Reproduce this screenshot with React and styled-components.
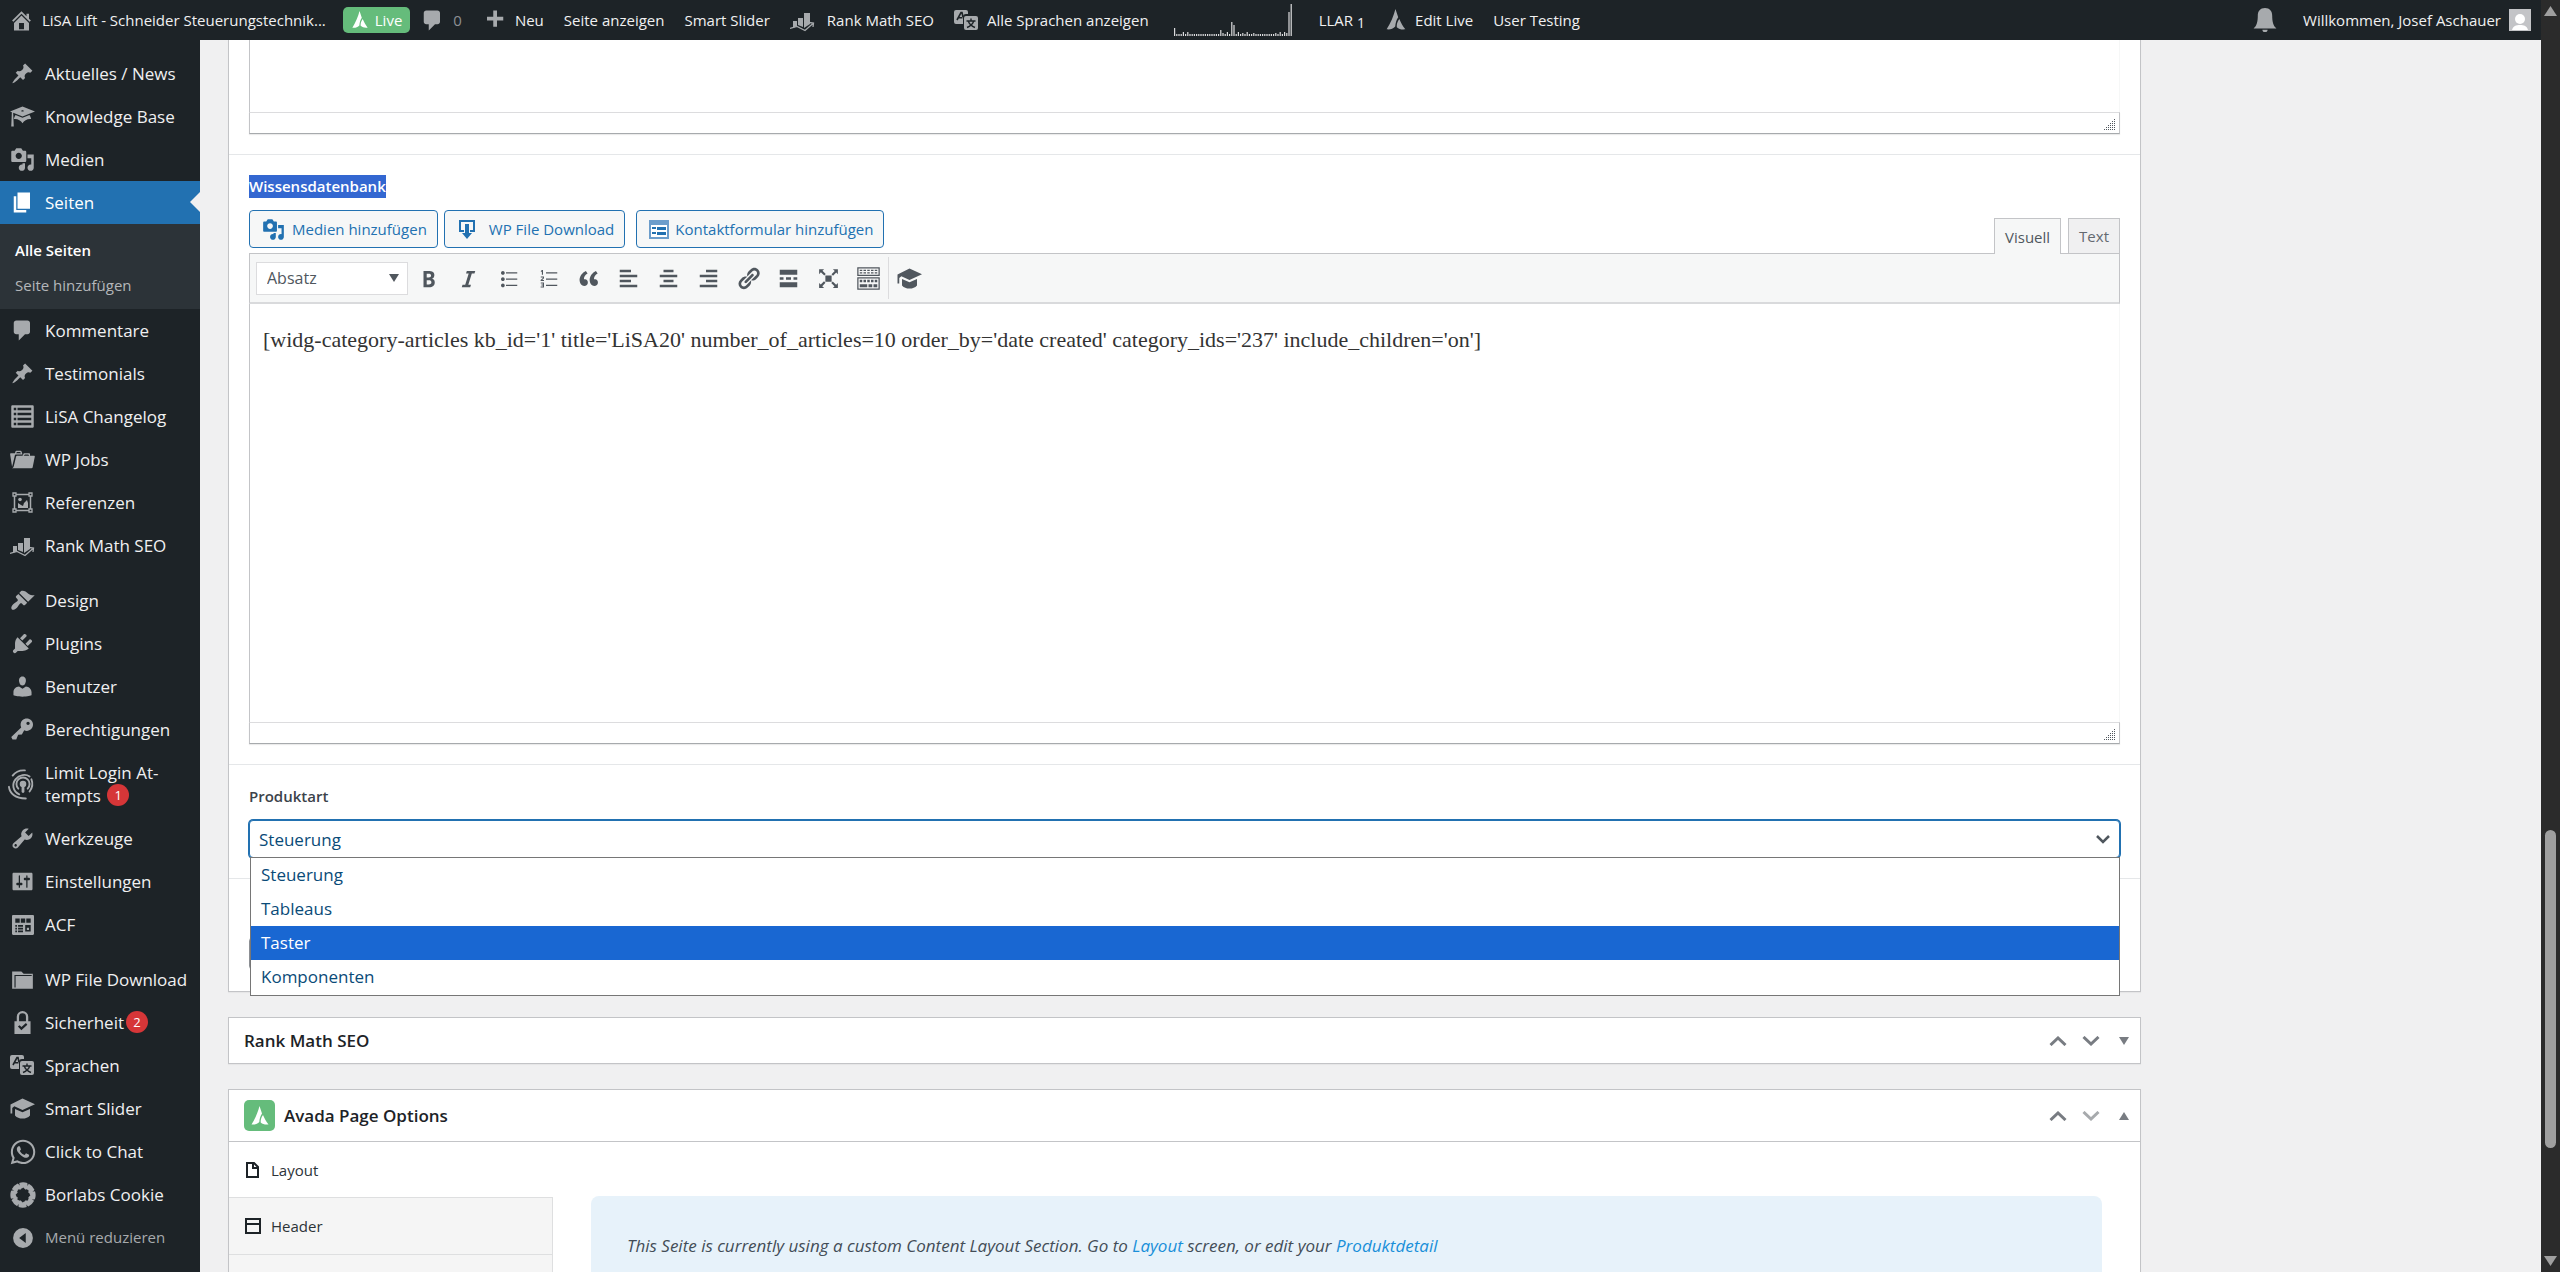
/*
  App.jsx: page edit screen (admin bar, side menu, meta boxes)
*/

import React from 'react'
import styled, { createGlobalStyle, css } from 'styled-components';
import { FaWhatsapp } from 'react-icons/fa';

const GlobalStyle = createGlobalStyle`
  * { box-sizing: border-box; }
  html, body, #root { height: 100%; }
  body {
    margin: 0;
    overflow: hidden;
    background: #f0f0f1;
    color: #3c434a;
    font-family: "Open Sans", "Noto Sans", sans-serif;
    font-size: 15px;
  }
  a { text-decoration: none; }
  button, select, input, textarea { font-family: inherit; margin: 0; }
`;

/* ---------- icons ---------- */

// single path glyphs on a 20x20 grid
const PATHS = {
  home: 'M16 8.5l1.53 1.53-1.06 1.06L10 4.6l-6.47 6.49-1.06-1.06L10 2.5l4 4v-2h2v4zm-6-2.46l6 5.99V18H4v-5.97zM12 17v-5H8v5h4z',
  plus: 'M17 7v3h-5v5H9v-5H4V7h5V2h3v5h5z',
  pin: 'M10.44 3.02l1.82-1.82 6.36 6.35-1.83 1.82c-1.05-.68-2.48-.57-3.41.36l-.75.75c-.92.93-1.04 2.35-.35 3.41l-1.83 1.82-2.41-2.41-2.8 2.79c-.42.42-3.38 2.71-3.8 2.29s1.86-3.39 2.28-3.81l2.79-2.79L4.1 9.36l1.83-1.82c1.05.69 2.48.57 3.4-.36l.75-.75c.93-.92 1.05-2.35.36-3.41z',
  learn: 'M10 10L2.54 7.02 3 18H1l.48-11.41L0 6l10-4 10 4zm0-5c-.55 0-1 .22-1 .5s.45.5 1 .5 1-.22 1-.5-.45-.5-1-.5zm0 6l5.57-2.23c.71.94 1.2 2.07 1.36 3.3-.3-.04-.61-.07-.93-.07-2.55 0-4.78 1.37-6 3.41C8.78 13.37 6.55 12 4 12c-.32 0-.63.03-.93.07.16-1.23.65-2.36 1.36-3.3z',
  media: 'M13 11V4c0-.55-.45-1-1-1h-1.67L9 1H5L3.67 3H2c-.55 0-1 .45-1 1v7c0 .55.45 1 1 1h10c.55 0 1-.45 1-1zM7 4.5c1.38 0 2.5 1.12 2.5 2.5S8.38 9.5 7 9.5 4.5 8.38 4.5 7 5.62 4.5 7 4.5zM14 6h5v10.5c0 1.38-1.12 2.5-2.5 2.5S14 17.88 14 16.5s1.12-2.5 2.5-2.5c.17 0 .34.02.5.05V9h-3V6zm-4 8.05V13h2v3.5c0 1.38-1.12 2.5-2.5 2.5S7 17.88 7 16.5 8.12 14 9.5 14c.17 0 .34.02.5.05z',
  page: 'M6 15V2h10v13H6zm-1 1h8v2H3V5h2v11z',
  comment: 'M5 2h9c1.1 0 2 .9 2 2v7c0 1.1-.9 2-2 2h-2l-5 5v-5H5c-1.1 0-2-.9-2-2V4c0-1.1.9-2 2-2z',
  portfolio: 'M4 5H.78c-.37 0-.74.32-.69.84l1.56 9.99S3.5 8.47 3.86 6.7c.11-.53.61-.7.98-.7H10s-.7-2.08-.77-2.31C9.11 3.25 8.89 3 8.45 3H5.14c-.36 0-.7.23-.8.64C4.25 4.04 4 5 4 5zm4.88 0h-4s.42-1 .87-1h2.13c.48 0 1 1 1 1zM2.67 16.25c-.31.47-.76.75-1.26.75h15.73c.54 0 .92-.31 1.03-.83.44-2.19 1.68-8.44 1.68-8.44.07-.5-.3-.73-.62-.73H16V5.53c0-.16-.26-.53-.66-.53h-3.76c-.52 0-.87.58-.87.58L10 7H5.59c-.32 0-.63.19-.69.5 0 0-1.59 6.7-1.72 7.33-.07.37-.22.99-.51 1.42zM15.38 7H11s.58-1 1.13-1h2.29c.71 0 .96 1 .96 1z',
  brush: 'M14.48 11.06L7.41 3.99l1.5-1.5c.5-.56 2.3-.47 3.51.32 1.21.8 1.43 1.28 2.91 2.1 1.18.64 2.45 1.26 4.45.85zm-.71.71L6.7 4.7 4.93 6.47c-.39.39-.39 1.02 0 1.41l1.06 1.06c.39.39.39 1.03 0 1.42-.6.6-1.43 1.11-2.21 1.69-.35.26-.7.53-1.01.84C1.43 14.23.4 16.08 1.4 17.07c.99 1 2.84-.03 4.18-1.36.31-.31.58-.66.85-1.02.57-.78 1.08-1.61 1.69-2.21.39-.39 1.02-.39 1.41 0l1.06 1.06c.39.39 1.02.39 1.41 0z',
  plug: 'M13.11 4.36L9.87 7.6 8 5.73l3.24-3.24c.35-.34 1.05-.2 1.56.32.52.51.66 1.21.31 1.55zm-8 1.77l.91-1.12 9.01 9.01-1.19.84c-.71.71-2.63 1.16-3.82 1.16H6.14L4.9 17.26c-.59.59-1.54.59-2.12 0-.59-.58-.59-1.53 0-2.12l1.24-1.24v-3.88c0-1.13.4-3.19 1.09-3.89zm7.26 3.97l3.24-3.24c.34-.35 1.04-.21 1.55.31.52.51.66 1.21.31 1.55l-3.24 3.25z',
  user: 'M10 9.25c-2.27 0-2.73-3.44-2.73-3.44C7 4.02 7.82 2 9.97 2c2.16 0 2.98 2.02 2.71 3.81 0 0-.41 3.44-2.68 3.44zm0 2.57L12.72 10c2.39 0 4.52 2.33 4.52 4.53v2.49s-3.65 1.13-7.24 1.13c-3.65 0-7.24-1.13-7.24-1.13v-2.49c0-2.25 1.94-4.48 4.47-4.48z',
  key: 'M16.95 2.58c1.96 1.95 1.96 5.12 0 7.07-1.51 1.51-3.75 1.84-5.59 1.01l-1.87 3.31-2.99.31L5 18H2l-1-2 7.95-7.69c-.92-1.87-.62-4.18.93-5.73 1.95-1.96 5.12-1.96 7.07 0zm-2.51 3.79c.74 0 1.33-.6 1.33-1.34 0-.73-.59-1.33-1.33-1.33-.73 0-1.33.6-1.33 1.33 0 .74.6 1.34 1.33 1.34z',
  wrench: 'M16.68 9.77c-1.34 1.34-3.3 1.67-4.95.99l-5.41 6.52c-.99.99-2.59.99-3.58 0s-.99-2.59 0-3.57l6.52-5.42c-.68-1.65-.35-3.61.99-4.95 1.28-1.28 3.12-1.62 4.72-1.06l-2.89 2.89 2.82 2.82 2.86-2.87c.53 1.58.18 3.39-1.08 4.65zM3.81 16.21c.4.39 1.04.39 1.43 0 .4-.4.4-1.04 0-1.43-.39-.4-1.03-.4-1.43 0-.39.39-.39 1.03 0 1.43z',
  settings: 'M18 16V4c0-.55-.45-1-1-1H3c-.55 0-1 .45-1 1v12c0 .55.45 1 1 1h14c.55 0 1-.45 1-1zM8 11h1c.55 0 1 .45 1 1s-.45 1-1 1H8v1.5c0 .28-.22.5-.5.5s-.5-.22-.5-.5V13H6c-.55 0-1-.45-1-1s.45-1 1-1h1V5.5c0-.28.22-.5.5-.5s.5.22.5.5V11zm5-2h-1c-.55 0-1-.45-1-1s.45-1 1-1h1V5.5c0-.28.22-.5.5-.5s.5.22.5.5V7h1c.55 0 1 .45 1 1s-.45 1-1 1h-1v5.5c0 .28-.22.5-.5.5s-.5-.22-.5-.5V9z',
  list: 'M2 19h16c.55 0 1-.45 1-1V2c0-.55-.45-1-1-1H2c-.55 0-1 .45-1 1v16c0 .55.45 1 1 1zM3 3h2v2H3zM6 3h11v2H6zM3 7h2v2H3zM6 7h11v2H6zM3 11h2v2H3zM6 11h11v2H6zM3 15h2v2H3zM6 15h11v2H6z',
  acf: 'M1 1h18c.5 0 1 .5 1 1v16c0 .5-.5 1-1 1H1c-.5 0-1-.5-1-1V2c0-.5.5-1 1-1zM3 4v4h4V4zM8 4v4h4V4zM13 4v4h4V4zM12 10v6h5v-6zM13.500 12.500h2v2h-2zM3 10v1.500h1.500V10zM5.500 10v1.500H10V10zM3 12.500v1.500h1.500v-1.500zM5.500 12.500v1.500H10v-1.500zM3 15v1.500h1.500V15zM5.500 15v1.500H10V15z',
  folder: 'M1 3h8l2 2h8v13H1zM3 6v11h1V7h14V6z',
  lock: 'M10 0a5 5 0 0 1 5 5v4h2v11H3V9h2V5a5 5 0 0 1 5-5zM10 2a3 3 0 0 0-3 3v4h6V5a3 3 0 0 0-3-3zM6 13.500l3 3.200 5.200-4.700-1.200-1.500-3.900 3.500-1.700-1.700z',
  collapse: 'M10 1a9 9 0 1 1 0 18 9 9 0 0 1 0-18zM12.500 5.500L6.500 10l6 4.500z',
  bell: 'M10 0c4 0 6 2.600 6 6.500 0 4.500.8 8.500 3.500 10.500H.5C3.200 15 4 11 4 6.500 4 2.600 6 0 10 0zM7.800 18.200h4.400a2.200 2 0 0 1-4.400 0z',
  cap: 'M10 2l10 4.600-10 4.600-6.500-3L1.800 9.500V14H.4V6.800zM4 10.300l6 2.700 6-2.700v5.200c-1.500 1.700-3.500 2.500-6 2.500s-4.500-.8-6-2.500z',
  bold: 'M6 4v13h4.540c1.370 0 2.460-.33 3.260-1 .8-.66 1.200-1.580 1.200-2.770 0-.84-.17-1.510-.51-2.010s-.9-.85-1.670-1.030v-.09c.57-.1 1.020-.4 1.360-.9s.51-1.130.51-1.910c0-1.140-.39-1.980-1.170-2.500C12.750 4.260 11.500 4 9.780 4H6zm2.570 5.150V6.260h1.360c.73 0 1.270.11 1.610.32.34.22.51.58.51 1.070 0 .54-.16.92-.47 1.150s-.82.35-1.510.35h-1.500zm0 2.190h1.600c1.440 0 2.160.53 2.160 1.610 0 .6-.17 1.050-.51 1.340s-.86.43-1.570.43H8.570v-3.380z',
  italic: 'M14.78 6h-2.130l-2.800 9h2.120l-.62 2H4.600l.62-2h2.140l2.800-9H8.030l.62-2h6.750z',
  ul: 'M5.500 7C4.670 7 4 6.330 4 5.500 4 4.680 4.670 4 5.500 4 6.320 4 7 4.680 7 5.500 7 6.330 6.320 7 5.500 7zM8 5h9v1H8V5zm-2.500 7c-.83 0-1.500-.67-1.500-1.500C4 9.680 4.670 9 5.500 9c.82 0 1.500.68 1.500 1.500 0 .83-.68 1.500-1.500 1.500zM8 10h9v1H8v-1zm-2.500 7c-.83 0-1.500-.67-1.500-1.500 0-.82.67-1.500 1.500-1.500.82 0 1.500.68 1.500 1.500 0 .83-.68 1.500-1.500 1.500zM8 15h9v1H8v-1z',
  ol: 'M8 5h9v1H8zM8 10h9v1H8zM8 15h9v1H8zM4.700 3.200h.9V7h-.9V4.400l-.8.4v-.9zM3.800 8.300h2.600v1.500L5 11.200h1.400v.8H3.700v-.8l1.800-1.700v-.4H3.800zM3.800 13.200h2.600v4H3.700v-.8h1.800v-.9H4.300v-.7h1.200V14H3.800z',
  quote: 'M9.490 13.220c0-.74-.2-1.380-.61-1.900-.62-.78-1.830-.88-2.530-.72-.29-1.650 1.110-3.750 2.920-4.650L7.880 4c-2.730 1.300-5.420 4.280-4.960 8.050C3.210 14.430 4.590 16 6.540 16c.85 0 1.560-.25 2.120-.75s.83-1.180.83-2.030zm8.050 0c0-.74-.2-1.380-.61-1.900-.63-.78-1.830-.88-2.530-.72-.29-1.650 1.110-3.750 2.920-4.650L15.930 4c-2.730 1.300-5.410 4.280-4.950 8.050.29 2.380 1.660 3.950 3.610 3.950.85 0 1.560-.25 2.120-.75s.83-1.180.83-2.030z',
  left: 'M12 5V3H3v2h9zm5 4V7H3v2h14zm-5 4v-2H3v2h9zm5 4v-2H3v2h14z',
  center: 'M14 5V3H6v2h8zm3 4V7H3v2h14zm-3 4v-2H6v2h8zm3 4v-2H3v2h14z',
  right: 'M17 5V3H8v2h9zm0 4V7H3v2h14zm0 4v-2H8v2h9zm0 4v-2H3v2h14z',
  link: 'M17.740 2.760c1.680 1.690 1.680 4.410 0 6.100l-1.530 1.520c-1.120 1.120-2.700 1.470-4.140 1.090l2.620-2.610.76-.77.76-.76c.84-.84.84-2.200 0-3.040-.84-.85-2.200-.85-3.040 0l-.77.76-3.380 3.380c-.37-1.440-.02-3.020 1.100-4.140l1.520-1.530c1.690-1.680 4.420-1.680 6.100 0zM8.590 13.430l5.340-5.340c.42-.42.42-1.100 0-1.520-.44-.43-1.130-.39-1.530 0l-5.330 5.340c-.42.42-.42 1.100 0 1.520.44.43 1.130.39 1.520 0zm-.76 2.290l4.140-4.150c.38 1.440.03 3.020-1.090 4.140l-1.520 1.530c-1.690 1.680-4.410 1.680-6.100 0-1.680-1.680-1.680-4.420 0-6.100l1.530-1.520c1.120-1.120 2.700-1.470 4.140-1.100l-4.140 4.150c-.85.84-.85 2.200 0 3.050.84.84 2.200.84 3.040 0z',
  more: 'M17 7V3H3v4h14zM6 11V9H3v2h3zm6 0V9H8v2h4zm5 0V9h-3v2h3zm0 6v-4H3v4h14z',
  full: 'M7.500 7.500h5v5h-5zM2.500 2.500h4L5.200 3.800l2.600 2.600-1.200 1.200-2.700-2.600L2.500 6.500zM17.500 2.500v4l-1.300-1.300-2.600 2.600-1.200-1.200 2.600-2.700-1.500-1.400zM2.500 17.500v-4l1.300 1.300 2.600-2.600 1.200 1.200-2.600 2.700 1.500 1.400zM17.500 17.500h-4l1.300-1.300-2.600-2.600 1.200-1.200 2.700 2.600 1.400-1.500z',
  sink: 'M1 1h18v7H1zM2 2v5h16V2zM3 3h2v1H3zM6 3h2v1H6zM9 3h2v1H9zM12 3h2v1h-2zM15 3h2v1h-2zM3 5h2v1H3zM6 5h2v1H6zM9 5h2v1H9zM12 5h2v1h-2zM15 5h2v1h-2zM1 9h18v10H1zM2 10v8h16v-8zM3 11h2v2H3zM6 11h2v2H6zM9 11h2v2H9zM12 11h2v2h-2zM15 11h2v2h-2zM3 14.500h6V17H3zM10 14.500h3V17h-3zM14 14.500h3V17h-3z',
  download: 'M2 1h16v12h-5v-2h3V3H4v8h3v2H2zM8 5h4v9h3l-5 6-5-6h3z',
};

function Glyph({ name, size = 25 }) {
  return (
    <svg width={size} height={size} viewBox="0 0 20 20" fill="currentColor" fillRule="evenodd" aria-hidden="true">
      <path d={PATHS[name]} />
    </svg>
  );
}

function RankIcon({ size = 25 }) {
  return (
    <svg width={size} height={size} viewBox="0 0 25 25" fill="currentColor" aria-hidden="true">
      <path d="M3 13h4v5l-4 2zM8 10h5v9l-5-2zM14 5h6v11l-6 4z" />
      <path d="M0 20.500l7-2 8 4 8-7M19 14.500l4.500.5-.5 4" fill="none" stroke="currentColor" strokeWidth="1.300" />
    </svg>
  );
}

function TranslateIcon({ size = 25 }) {
  return (
    <svg width={size} height={size} viewBox="0 0 25 25" aria-hidden="true">
      <path d="M2 2h10a2 2 0 0 1 2 2v2h-2a3 3 0 0 0-3 3v7H2a2 2 0 0 1-2-2V4a2 2 0 0 1 2-2z" fill="currentColor" />
      <path d="M12 8h10a2 2 0 0 1 2 2v10a2 2 0 0 1-2 2H12a2 2 0 0 1-2-2V10a2 2 0 0 1 2-2z" fill="currentColor" />
      <path d="M3 12l4-7.500h1L9 9M4.500 9.800H8.500" fill="none" stroke="#1d2327" strokeWidth="1.600" />
      <path d="M17 10.500v2M12.500 13h9M14.500 13.500c.8 2.500 3 4.500 6.500 6M19.500 13.500c-.8 2.500-3 4.500-6.500 6" fill="none" stroke="#1d2327" strokeWidth="1.400" />
    </svg>
  );
}

function FingerIcon() {
  return (
    <svg width="30" height="32" viewBox="0 0 32 34" fill="none" stroke="currentColor" strokeWidth="2" strokeLinecap="round" aria-hidden="true">
      <circle cx="16" cy="17" r="2.500" fill="currentColor" />
      <path d="M16 18v7" strokeWidth="3" />
      <path d="M11 22a7 7 0 1 1 10 0" />
      <path d="M12 28C5 25 4 17 8 12S19 6 23 9M25 12c2 5 1 9-2 13" />
      <path d="M1 20c1 7 7 12 18 12.500M5 8c3-4 7-6 13-5.500" />
    </svg>
  );
}

function ReferenceIcon() {
  return (
    <svg width="23" height="23" viewBox="0 0 23 23" fill="none" stroke="currentColor" aria-hidden="true">
      <path d="M3.500 3.500h16v16h-16z" strokeWidth="1.500" />
      <path d="M2 2h3v3H2zM18 2h3v3h-3zM2 18h3v3H2zM18 18h3v3h-3z" fill="#1d2327" strokeWidth="1.300" />
      <circle cx="9" cy="8.500" r="1.800" fill="currentColor" stroke="none" />
      <path d="M7 12l3 2 2 1 1-3 3-3 1 3v5H7z" fill="currentColor" stroke="none" />
    </svg>
  );
}

function BorlabsIcon() {
  return (
    <svg width="26" height="26" viewBox="-13 -13 26 26" fill="currentColor" aria-hidden="true">
      {[0, 45, 90, 135, 180, 225, 270, 315].map(a => (
        <path key={a} transform={`rotate(${a})`} d="M-3.800 -12A12.600 12.600 0 0 1 4.300 -11.900C5 -9 4 -6.500 2.500 -5.200L.3 -7.400C-1.500 -5.800 -3.500 -6 -5 -7.200C-3.300 -8.300 -3 -10 -3.800 -12z" />
      ))}
    </svg>
  );
}

function AvadaMark({ size }) {
  return (
    <svg width={size} height={size} viewBox="0 0 20 20" fill="currentColor" aria-hidden="true">
      <path d="M9.500 0C8 6 5 13 1.500 18.500c3 .4 5.800-.3 7.800-2.500.3-3.500 1-6 2.700-8.500z" />
      <path d="M13 9c-1.800 2.500-2.500 4.800-2.300 7.500 2 1.800 4.300 2.300 7.800 2-2.300-3-4-6-5.500-9.500z" />
    </svg>
  );
}

function Chevron({ up, width = 18 }) {
  return (
    <svg width={width} height="10" viewBox="0 0 18 10" fill="none" stroke="currentColor" strokeWidth="3" aria-hidden="true">
      <path d={up ? 'M1.500 9L9 2l7.500 7' : 'M1.500 1L9 8l7.500-7'} />
    </svg>
  );
}

/* ---------- admin bar ---------- */

const Bar = styled.header`
  display: flex;
  align-items: center;
  height: 40px;
  padding-left: 9px;
  background: #1d2327;
  color: #f0f0f1;
  line-height: 40px;
`;

const BarLink = styled.a`
  display: flex;
  align-items: center;
  gap: ${props => props.$gap || 8}px;
  padding: 0 ${props => props.$pad || 10}px;
  color: ${props => props.$dim ? '#8c8f94' : '#f0f0f1'};
  white-space: nowrap;

  &:first-child { padding-left: 0; }

  svg { color: #a7aaad; flex: none; }
`;

const LiveBadge = styled.a`
  display: flex;
  align-items: center;
  gap: 6px;
  height: 26px;
  margin-left: 7px;
  padding: 0 8px;
  border-radius: 5px;
  background: #65bc7b;
  color: #fff;
  line-height: 26px;
`;

const Small = styled.span`
  font-size: 14px;
  padding-top: 6px;
  margin-left: -4px;
`;

const Spacer = styled.div`
  flex: 1;
`;

const Avatar = styled.svg`
  width: 22px;
  height: 22px;
`;

const SPARK = [8,2,2,2,4,2,4,2,2,2,2,2,2,2,2,2,2,2,2,2,2,6,3,2,4,2,14,11,2,4,2,3,2,4,2,2,3,2,2,2,2,2,2,2,2,2,3,2,4,2,4,3,24,32];

function Sparkline() {
  return (
    <svg width="124" height="34" viewBox="0 0 124 34" aria-hidden="true">
      {SPARK.map((h, i) => (
        <rect key={i} x={2 + i * 2.2} y={33 - h} width="1.200" height={h} fill="#dcdcde" />
      ))}
    </svg>
  );
}

function AdminBar() {
  return (
    <Bar>
      <BarLink href="#"><Glyph name="home" />LiSA Lift - Schneider Steuerungstechnik...</BarLink>
      <LiveBadge href="#"><AvadaMark size={18} />Live</LiveBadge>
      <BarLink href="#" $dim><Glyph name="comment" />0</BarLink>
      <BarLink href="#"><Glyph name="plus" />Neu</BarLink>
      <BarLink href="#">Seite anzeigen</BarLink>
      <BarLink href="#">Smart Slider</BarLink>
      <BarLink href="#" $gap={12}><RankIcon />Rank Math SEO</BarLink>
      <BarLink href="#"><TranslateIcon />Alle Sprachen anzeigen</BarLink>
      <BarLink href="#" $pad={13}><Sparkline /></BarLink>
      <BarLink href="#">LLAR <Small>1</Small></BarLink>
      <BarLink href="#"><AvadaMark size={22} />Edit Live</BarLink>
      <BarLink href="#">User Testing</BarLink>
      <Spacer />
      <BarLink href="#" $pad={16}><Glyph name="bell" size={24} /></BarLink>
      <BarLink href="#">
        Willkommen, Josef Aschauer
        <Avatar viewBox="0 0 22 22" aria-hidden="true">
          <path d="M0 0h22v22H0z" fill="#c3c4c7" />
          <circle cx="11" cy="10" r="5" fill="#fff" />
          <path d="M3 21c1-4 4-5 8-5s7 1 8 5z" fill="#fff" />
        </Avatar>
      </BarLink>
    </Bar>
  );
}

/* ---------- side menu ---------- */

const SideMenu = styled.nav`
  flex: none;
  width: 200px;
  padding-top: 12px;
  background: #1d2327;
  font-size: 17px;
  line-height: 23px;
`;

const MenuItem = styled.a`
  position: relative;
  display: grid;
  grid-template-columns: 45px 1fr;
  align-items: center;
  min-height: 43px;
  padding: 10px 0;
  color: ${props => props.$muted ? '#a7aaad' : '#f0f0f1'};
  font-size: ${props => props.$muted ? 15 : 17}px;
  margin-top: ${props => props.$group ? 12 : 0}px;
  white-space: nowrap;

  svg {
    justify-self: center;
    color: #a7aaad;
    margin: -4px 0;
  }

  ${props => props.$active && css`
    background: #2271b1;
    color: #fff;

    svg { color: #fff; }

    &::after {
      content: '';
      position: absolute;
      right: 0;
      top: 11px;
      border: 10px solid transparent;
      border-left: 0;
      border-right-color: #f0f0f1;
    }
  `}
`;

const SubMenu = styled.div`
  display: flex;
  flex-direction: column;
  padding: 9px 15px 6px;
  background: #2c3338;
  font-size: 15px;
  line-height: 35px;
`;

const SubLink = styled.a`
  color: ${props => props.$current ? '#fff' : '#b4b7ba'};
  font-weight: ${props => props.$current ? 600 : 400};
`;

const Count = styled.span`
  display: inline-block;
  width: 22px;
  height: 22px;
  margin-left: 2px;
  border-radius: 50%;
  background: #d63638;
  color: #fff;
  font-size: 13px;
  line-height: 22px;
  text-align: center;
  vertical-align: top;
`;

const menu = [
  { text: 'Aktuelles / News', icon: <Glyph name="pin" size={23} /> },
  { text: 'Knowledge Base', icon: <Glyph name="learn" /> },
  { text: 'Medien', icon: <Glyph name="media" /> },
  { text: 'Seiten', icon: <Glyph name="page" />, active: true },
  { text: 'Kommentare', icon: <Glyph name="comment" /> },
  { text: 'Testimonials', icon: <Glyph name="pin" size={23} /> },
  { text: 'LiSA Changelog', icon: <Glyph name="list" /> },
  { text: 'WP Jobs', icon: <Glyph name="portfolio" /> },
  { text: 'Referenzen', icon: <ReferenceIcon /> },
  { text: 'Rank Math SEO', icon: <RankIcon /> },
  { text: 'Design', icon: <Glyph name="brush" />, group: true },
  { text: 'Plugins', icon: <Glyph name="plug" /> },
  { text: 'Benutzer', icon: <Glyph name="user" /> },
  { text: 'Berechtigungen', icon: <Glyph name="key" /> },
  { text: <>Limit Login At-<br />tempts <Count>1</Count></>, icon: <FingerIcon /> },
  { text: 'Werkzeuge', icon: <Glyph name="wrench" /> },
  { text: 'Einstellungen', icon: <Glyph name="settings" /> },
  { text: 'ACF', icon: <Glyph name="acf" size={22} /> },
  { text: 'WP File Download', icon: <Glyph name="folder" size={23} />, group: true },
  { text: <>Sicherheit<Count>2</Count></>, icon: <Glyph name="lock" size={23} /> },
  { text: 'Sprachen', icon: <TranslateIcon /> },
  { text: 'Smart Slider', icon: <Glyph name="cap" /> },
  { text: 'Click to Chat', icon: <FaWhatsapp size={28} /> },
  { text: 'Borlabs Cookie', icon: <BorlabsIcon /> },
  { text: 'Menü reduzieren', icon: <Glyph name="collapse" size={22} />, muted: true },
];

function Sidebar() {
  return (
    <SideMenu>
      {menu.map((item, i) => (
        <React.Fragment key={i}>
          <MenuItem href="#" $active={item.active} $group={item.group} $muted={item.muted}>
            {item.icon}
            <span>{item.text}</span>
          </MenuItem>
          {item.active && (
            <SubMenu>
              <SubLink href="#" $current>Alle Seiten</SubLink>
              <SubLink href="#">Seite hinzufügen</SubLink>
            </SubMenu>
          )}
        </React.Fragment>
      ))}
    </SideMenu>
  );
}

/* ---------- meta boxes ---------- */

const Below = styled.div`
  display: flex;
  height: calc(100vh - 40px);
  overflow: hidden;
`;

const Content = styled.main`
  flex: 1;
  min-width: 0;
  display: flex;
  flex-direction: column;
  gap: 25px;
  padding: 0 400px 0 28px;
`;

const Box = styled.section`
  flex: none;
  border: 1px solid #c3c4c7;
  border-top-width: ${props => props.$cut ? 0 : 1}px;
  background: #fff;
  box-shadow: 0 1px 1px rgba(0, 0, 0, 0.04);
`;

const Field = styled.div`
  position: relative;
  padding: 20px;
  padding-top: ${props => props.$cut ? 0 : 20}px;
  border-top: ${props => props.$cut ? '0' : '1px solid #e5e7e9'};
`;

const FieldLabel = styled.label`
  display: block;
  margin-bottom: 12px;
  color: #3c434a;
  font-size: 15px;
  font-weight: 600;
  line-height: 23px;
`;

const Selected = styled.span`
  display: inline-block;
  background: #3367d1;
  color: #fff;
`;

const ToolsRow = styled.div`
  display: flex;
  height: 43px;
`;

const MediaButton = styled.button`
  display: flex;
  align-items: center;
  gap: ${props => props.$gap}px;
  height: 38px;
  padding: 0 10px 0 12px;
  margin-right: ${props => props.$after || 0}px;
  border: 1px solid #2271b1;
  border-radius: 4px;
  background: #f6f7f7;
  color: #2271b1;
  font-size: 15px;
`;

const EditorTab = styled.button`
  align-self: flex-end;
  position: relative;
  height: ${props => props.$on ? 36 : 35}px;
  margin: 0 0 ${props => props.$on ? -1 : 0}px ${props => props.$on ? 'auto' : '7px'};
  padding: 0 10px;
  border: 1px solid #c3c4c7;
  border-bottom: 0;
  background: ${props => props.$on ? '#f6f7f7' : '#f0f0f1'};
  color: ${props => props.$on ? '#50575e' : '#646970'};
  font-size: 15px;
`;

const Toolbar = styled.div`
  display: flex;
  align-items: center;
  height: 51px;
  padding: 0 6px;
  border: 1px solid #c3c4c7;
  border-bottom: 2px solid #d9dadc;
  background: #f6f7f7;
`;

const FormatSelect = styled.select`
  width: 152px;
  height: 33px;
  padding: 0 10px;
  appearance: none;
  border: 1px solid #dcdcde;
  background: #fff url("data:image/svg+xml,%3Csvg xmlns='http://www.w3.org/2000/svg' width='10' height='8'%3E%3Cpath d='M0 0h10L5 8z' fill='%2350575e'/%3E%3C/svg%3E") no-repeat right 8px center;
  color: #50575e;
  font-size: 16px;
`;

const ToolButton = styled.button`
  display: grid;
  place-items: center;
  width: 34px;
  height: 34px;
  margin: 0 3px;
  padding: 0;
  border: 0;
  background: none;
  color: #50575e;
`;

const ToolDivider = styled.span`
  width: 1px;
  height: 42px;
  background: #dcdcde;
`;

const EditorText = styled.textarea`
  display: block;
  width: 100%;
  height: ${props => props.$height}px;
  padding: 22px 13px;
  border: 1px solid #f6f7f7;
  border-left-color: #c3c4c7;
  border-width: 0 1px;
  outline: 0;
  resize: none;
  background: #fff;
  color: #333;
  font-family: Georgia, "Liberation Serif", serif;
  font-size: 22px;
  line-height: 27px;
`;

const StatusBar = styled.div`
  display: flex;
  justify-content: flex-end;
  align-items: flex-end;
  height: 22px;
  padding: 0 3px 3px;
  border: 1px solid #c3c4c7;
  border-top-color: #dcdcde;
  border-bottom-color: #a7aaad;
  box-shadow: 0 1px 1px rgba(0, 0, 0, 0.08);
  color: #50575e;
`;

function Status() {
  const dots = [];
  for (let r = 0; r < 6; r++) {
    for (let c = 5 - r; c < 6; c++) {
      dots.push(<rect key={r + '-' + c} x={c * 2} y={r * 2 + 1} width="1" height="1" fill="currentColor" />);
    }
  }
  return <StatusBar><svg width="12" height="12" aria-hidden="true">{dots}</svg></StatusBar>;
}

const SelectWrap = styled.div`
  position: relative;
`;

const ProductSelect = styled.select`
  display: block;
  width: 100%;
  height: 38px;
  padding: 0 9px;
  appearance: none;
  border: 1px solid #2271b1;
  border-radius: 4px;
  outline: 0;
  box-shadow: 0 0 0 1px #2271b1;
  background: #fff url("data:image/svg+xml,%3Csvg xmlns='http://www.w3.org/2000/svg' width='14' height='9'%3E%3Cpath d='M1 1l6 6 6-6' fill='none' stroke='%2350575e' stroke-width='2.500'/%3E%3C/svg%3E") no-repeat right 9px center;
  color: #0a4b78;
  font-size: 17px;
`;

const OptionList = styled.ul`
  position: absolute;
  z-index: 2;
  top: 37px;
  left: 1px;
  right: 0;
  margin: 0;
  padding: 0 0 1px;
  border: 1px solid #767676;
  background: #fff;
  list-style: none;
`;

const Option = styled.li`
  padding: 0 10px;
  background: ${props => props.$hover ? '#1967d2' : '#fff'};
  color: ${props => props.$hover ? '#fff' : '#0a4b78'};
  font-size: 17px;
  line-height: 34px;
`;

const CoveredField = styled(Field)`
  height: 113px;
  padding-top: 58px;
`;

const CoveredControl = styled.div`
  height: 33px;
  border: 1px solid #8c8f94;
  border-radius: 4px;
`;

const BoxHeader = styled.div`
  display: flex;
  align-items: center;
  gap: 9px;
  height: ${props => props.$tall ? 51 : 45}px;
  padding-left: 15px;
`;

const BoxTitle = styled.h2`
  flex: 1;
  margin: 0;
  color: #1d2327;
  font-size: 17px;
  font-weight: 600;
`;

const LogoTile = styled.span`
  display: grid;
  place-items: center;
  width: 31px;
  height: 31px;
  border-radius: 5px;
  background: #65bc7b;
  color: #fff;
`;

const HandleGroup = styled.div`
  display: flex;
`;

const Handle = styled.button`
  display: grid;
  place-items: center;
  width: 33px;
  height: 40px;
  padding: 0;
  border: 0;
  background: none;
  color: ${props => props.$off ? '#a7aaad' : '#787c82'};
`;

function Handles({ open, last }) {
  return (
    <HandleGroup>
      <Handle><Chevron up /></Handle>
      <Handle $off={last}><Chevron /></Handle>
      <Handle>
        <svg width="10" height="8" viewBox="0 0 10 8" fill="currentColor" aria-hidden="true">
          <path d={open ? 'M0 8h10L5 0z' : 'M0 0h10L5 8z'} />
        </svg>
      </Handle>
    </HandleGroup>
  );
}

const Options = styled.div`
  display: grid;
  grid-template-columns: 324px 1fr;
  border-top: 1px solid #c3c4c7;
`;

const OptionTabs = styled.div`
  display: flex;
  flex-direction: column;
`;

const OptionTab = styled.a`
  display: flex;
  align-items: center;
  gap: 10px;
  height: ${props => props.$on ? 55 : 57}px;
  padding: 0 15px;
  border: solid #dedfe0;
  border-width: ${props => props.$on ? 0 : '1px 1px 0 0'};
  background: ${props => props.$on ? '#fff' : '#f5f5f5'};
  color: #2c3338;
  font-size: 15px;
`;

const Notice = styled.p`
  margin: 54px 38px 0 38px;
  padding: 32px 36px;
  border-radius: 8px;
  background: #e7f2fa;
  color: #434d57;
  font-size: 17px;
  font-style: italic;
  line-height: 36px;

  a { color: #198fd9; }
`;

/* ---------- window scrollbar ---------- */

const Screen = styled.div`
  display: grid;
  grid-template-columns: 1fr 19px;
  height: 100vh;
`;

const Page = styled.div`
  min-width: 0;
`;

const ScrollTrack = styled.div`
  display: flex;
  flex-direction: column;
  align-items: center;
  padding: 6px 0;
  background: #2b2b2b;
  color: #9f9f9f;

  svg:last-child { margin-top: auto; }
`;

const ScrollThumb = styled.div`
  width: 11px;
  height: 25vh;
  margin-top: 64vh;
  border-radius: 6px;
  background: #9f9f9f;
`;

const tools = ['bold', 'italic', 'ul', 'ol', 'quote', 'left', 'center', 'right', 'link', 'more', 'full', 'sink'];
const shortcode = "[widg-category-articles kb_id='1' title='LiSA20' number_of_articles=10 order_by='date created' category_ids='237' include_children='on']";

export default class App extends React.Component {
  state = {
    product: 'Steuerung',
    hover: 'Taster',
  };

  render() {
    const products = ['Steuerung', 'Tableaus', 'Taster', 'Komponenten'];
    return (
      <Screen>
        <GlobalStyle />
        <Page>
          <AdminBar />
          <Below>
            <Sidebar />
            <Content>
              <Box $cut>
                <Field $cut>
                  <EditorText $height={72} />
                  <Status />
                </Field>

                <Field>
                  <FieldLabel htmlFor="wissen"><Selected>Wissensdatenbank</Selected></FieldLabel>
                  <ToolsRow>
                    <MediaButton $gap={7} $after={6}><Glyph name="media" size={23} />Medien hinzufügen</MediaButton>
                    <MediaButton $gap={12} $after={11}><Glyph name="download" size={20} />WP File Download</MediaButton>
                    <MediaButton $gap={6}>
                      <svg width="20" height="19" viewBox="0 0 20 19" aria-hidden="true">
                        <path d="M0 0h20v19H0z" fill="#6c9dcb" />
                        <path d="M2 5h16v12H2z" fill="#fff" />
                        <path d="M3 7h4v2H3zM8 7h9v3H8zM3 12h4v2H3zM8 12h9v3H8z" fill="#2271b1" />
                      </svg>
                      Kontaktformular hinzufügen
                    </MediaButton>
                    <EditorTab $on>Visuell</EditorTab>
                    <EditorTab>Text</EditorTab>
                  </ToolsRow>
                  <Toolbar>
                    <FormatSelect><option>Absatz</option></FormatSelect>
                    {tools.map(t => <ToolButton key={t}><Glyph name={t} /></ToolButton>)}
                    <ToolDivider />
                    <ToolButton><Glyph name="cap" /></ToolButton>
                  </Toolbar>
                  <EditorText id="wissen" $height={418} defaultValue={shortcode} spellCheck="false" />
                  <Status />
                </Field>

                <Field>
                  <FieldLabel htmlFor="produktart">Produktart</FieldLabel>
                  <SelectWrap>
                    <ProductSelect id="produktart" value={this.state.product} onChange={e => this.setState({ product: e.target.value })}>
                      {products.map(p => <option key={p}>{p}</option>)}
                    </ProductSelect>
                    <OptionList>
                      {products.map(p => (
                        <Option key={p} $hover={p === this.state.hover} onMouseEnter={() => this.setState({ hover: p })}>{p}</Option>
                      ))}
                    </OptionList>
                  </SelectWrap>
                </Field>

                <CoveredField><CoveredControl /></CoveredField>
              </Box>

              <Box>
                <BoxHeader>
                  <BoxTitle>Rank Math SEO</BoxTitle>
                  <Handles />
                </BoxHeader>
              </Box>

              <Box>
                <BoxHeader $tall>
                  <LogoTile><AvadaMark size={20} /></LogoTile>
                  <BoxTitle>Avada Page Options</BoxTitle>
                  <Handles open last />
                </BoxHeader>
                <Options>
                  <OptionTabs>
                    <OptionTab href="#" $on>
                      <svg width="17" height="18" viewBox="0 0 17 18" fill="none" stroke="#1d2327" strokeWidth="2" aria-hidden="true">
                        <path d="M3 2h7l4 4v10H3zM9 2v5h5" />
                      </svg>
                      Layout
                    </OptionTab>
                    <OptionTab href="#">
                      <svg width="17" height="18" viewBox="0 0 17 18" fill="none" stroke="#1d2327" strokeWidth="2" aria-hidden="true">
                        <path d="M2 2h14v14H2zM2 7h14" />
                      </svg>
                      Header
                    </OptionTab>
                    <OptionTab href="#" />
                  </OptionTabs>
                  <Notice>
                    This Seite is currently using a custom Content Layout Section. Go to <a href="#">Layout</a> screen, or edit your <a href="#">Produktdetail</a>
                  </Notice>
                </Options>
              </Box>
            </Content>
          </Below>
        </Page>
        <ScrollTrack>
          <svg width="13" height="10" viewBox="0 0 13 10" fill="currentColor" aria-hidden="true"><path d="M6.500 0L13 10H0z" /></svg>
          <ScrollThumb />
          <svg width="13" height="10" viewBox="0 0 13 10" fill="currentColor" aria-hidden="true"><path d="M6.500 10L13 0H0z" /></svg>
        </ScrollTrack>
      </Screen>
    );
  }
}
